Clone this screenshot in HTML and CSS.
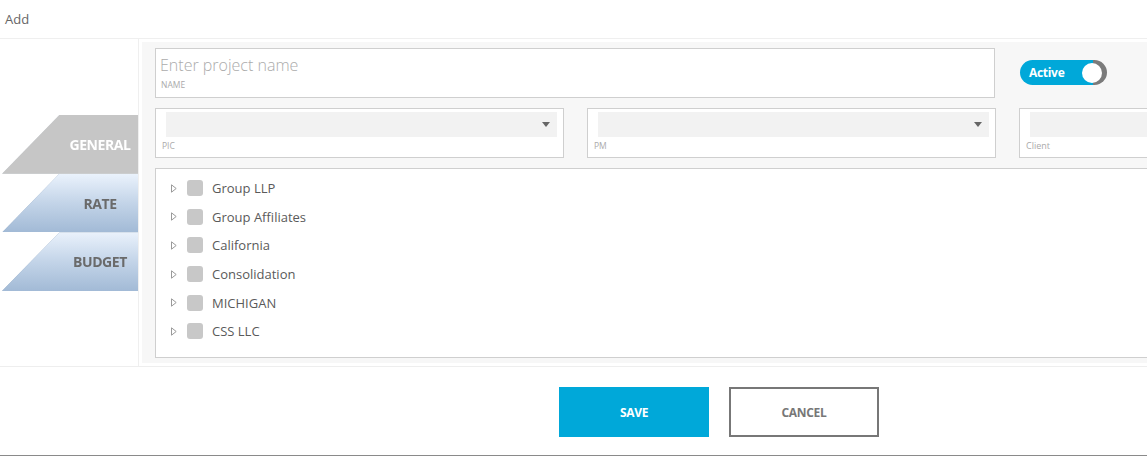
FILE: index.html
```html
<!DOCTYPE html>
<html>
<head>
<meta charset="utf-8">
<link rel="stylesheet" href="styles.css">
</head>
<body>
<div class="header">Add</div>
<div class="main">
  <div class="tabs">
    <div class="tab-wrap"><div class="tab tab-active">GENERAL</div></div>
    <div class="tab-wrap blue"><div class="tab tab-blue">RATE</div></div>
    <div class="tab-wrap blue"><div class="tab tab-blue">BUDGET</div></div>
  </div>
  <div class="content">
    <div class="panel">
      <div class="row1">
        <div class="field name-field">
          <div class="placeholder">Enter project name</div>
          <div class="label">NAME</div>
        </div>
        <div class="toggle">
          <span class="toggle-text">Active</span>
          <span class="knob"></span>
        </div>
      </div>
      <div class="row2">
        <div class="field select-field">
          <div class="select-bar"><svg class="caret" width="8" height="5" viewBox="0 0 8 5"><path d="M0 0 H8 L4 5 Z" fill="#666"/></svg></div>
          <div class="label">PIC</div>
        </div>
        <div class="field select-field">
          <div class="select-bar"><svg class="caret" width="8" height="5" viewBox="0 0 8 5"><path d="M0 0 H8 L4 5 Z" fill="#666"/></svg></div>
          <div class="label">PM</div>
        </div>
        <div class="field select-field">
          <div class="select-bar"></div>
          <div class="label label-cap">Client</div>
        </div>
      </div>
      <div class="tree">
        <div class="tree-item"><svg class="arrow" width="6" height="9" viewBox="0 0 6 9"><path d="M0.5 0.8 L5.2 4.5 L0.5 8.2 Z" fill="none" stroke="#9a9a9a" stroke-width="1"/></svg><span class="check"></span><span class="tree-text">Group LLP</span></div>
        <div class="tree-item"><svg class="arrow" width="6" height="9" viewBox="0 0 6 9"><path d="M0.5 0.8 L5.2 4.5 L0.5 8.2 Z" fill="none" stroke="#9a9a9a" stroke-width="1"/></svg><span class="check"></span><span class="tree-text">Group Affiliates</span></div>
        <div class="tree-item"><svg class="arrow" width="6" height="9" viewBox="0 0 6 9"><path d="M0.5 0.8 L5.2 4.5 L0.5 8.2 Z" fill="none" stroke="#9a9a9a" stroke-width="1"/></svg><span class="check"></span><span class="tree-text">California</span></div>
        <div class="tree-item"><svg class="arrow" width="6" height="9" viewBox="0 0 6 9"><path d="M0.5 0.8 L5.2 4.5 L0.5 8.2 Z" fill="none" stroke="#9a9a9a" stroke-width="1"/></svg><span class="check"></span><span class="tree-text">Consolidation</span></div>
        <div class="tree-item"><svg class="arrow" width="6" height="9" viewBox="0 0 6 9"><path d="M0.5 0.8 L5.2 4.5 L0.5 8.2 Z" fill="none" stroke="#9a9a9a" stroke-width="1"/></svg><span class="check"></span><span class="tree-text">MICHIGAN</span></div>
        <div class="tree-item"><svg class="arrow" width="6" height="9" viewBox="0 0 6 9"><path d="M0.5 0.8 L5.2 4.5 L0.5 8.2 Z" fill="none" stroke="#9a9a9a" stroke-width="1"/></svg><span class="check"></span><span class="tree-text">CSS LLC</span></div>
      </div>
    </div>
  </div>
</div>
<div class="footer">
  <button class="btn btn-save">SAVE</button>
  <button class="btn btn-cancel">CANCEL</button>
</div>
</body>
</html>
```

FILE: styles.css
```css
* { box-sizing: border-box; }
html, body { margin: 0; padding: 0; }
body {
  width: 1147px;
  height: 457px;
  overflow: hidden;
  background: #fff;
  font-family: "Open Sans", "Noto Sans", "Liberation Sans", sans-serif;
  color: #555;
}
.header {
  height: 39px;
  padding: 9px 0 0 5px;
  font-size: 13px;
  line-height: 20px;
  color: #666;
  border-bottom: 1px solid #efefef;
}
.main {
  display: flex;
  height: 328px;
  border-bottom: 1px solid #eeeeee;
}
.tabs {
  width: 139px;
  flex: none;
  border-right: 1px solid #efefef;
  padding-top: 76px;
  display: flex;
  flex-direction: column;
}
.tab-wrap {
  height: 58.7px;
  filter: drop-shadow(0 0 0.6px #d0d8e0);
}
.tab-wrap.blue {
  filter: drop-shadow(0 0 0.6px #8ea4bd);
}
.tab {
  height: 100%;
  clip-path: polygon(43% 0, 100% 0, 100% 100%, 1.5% 100%);
  padding-left: 62px;
  text-align: center;
  font-weight: 700;
  font-size: 14px;
  line-height: 60px;
  letter-spacing: -0.4px;
}
.tab-active {
  background: #c6c6c6;
  color: #fff;
}
.tab-blue {
  background: linear-gradient(to bottom, #eaf2fc 0%, #c3d4e8 50%, #a2bad6 100%);
  color: #6a6a6a;
}
.content {
  flex: 1;
  min-width: 0;
  padding: 3px 0 3px 3px;
}
.panel {
  height: 100%;
  background: #f7f7f7;
  padding: 6px 0 0 13px;
  overflow: hidden;
}
.field {
  background: #fff;
  border: 1px solid #cfcfcf;
  flex: none;
}
.row1 {
  display: flex;
  align-items: flex-start;
}
.name-field {
  width: 840px;
  height: 50px;
  padding: 4px 5px 0 4px;
}
.placeholder {
  font-size: 16px;
  font-weight: 300;
  line-height: 24px;
  color: #ababab;
}
.label {
  font-size: 8.5px;
  line-height: 10px;
  color: #aaa;
  margin-top: 3px;
  padding-left: 1px;
}
.label-cap { font-size: 9px; }
.toggle {
  margin: 12px 0 0 25px;
  width: 87px;
  height: 25px;
  border-radius: 12.5px;
  background: linear-gradient(to right, #00a8d9 0, #00a8d9 73px, #7b7b7b 73px);
  display: flex;
  align-items: center;
  padding: 0 5px 0 9px;
  flex: none;
}
.toggle-text {
  color: #fff;
  font-weight: 700;
  font-size: 12px;
  letter-spacing: -0.3px;
}
.knob {
  margin-left: auto;
  width: 20px;
  height: 20px;
  border-radius: 50%;
  background: #fff;
}
.row2 {
  display: flex;
  gap: 23px;
  margin-top: 10px;
}
.select-field {
  width: 409px;
  height: 50px;
  padding: 3px 6px 0 10px;
}
.select-bar {
  height: 25px;
  background: #f2f2f2;
  display: flex;
  align-items: center;
  justify-content: flex-end;
  padding-right: 7px;
}
.select-field .label {
  margin-top: 4px;
  margin-left: -5px;
}
.tree {
  margin-top: 10px;
  width: 1010px;
  height: 190px;
  background: #fff;
  border: 1px solid #cfcfcf;
  padding: 5px 0 0 15px;
}
.tree-item {
  height: 28.6px;
  display: flex;
  align-items: center;
}
.arrow {
  flex: none;
}
.check {
  width: 16px;
  height: 16px;
  border-radius: 3px;
  background: #c8c8c8;
  margin-left: 10px;
  flex: none;
}
.tree-text {
  margin-left: 9px;
  font-size: 13px;
  color: #5a5a5a;
}
.footer {
  height: 89px;
  border-bottom: 1px solid #8a8a8a;
  padding: 20px 0 0 559px;
  display: flex;
  gap: 20px;
  align-items: flex-start;
}
.btn {
  width: 150px;
  height: 50px;
  font-family: "Open Sans", "Noto Sans", "Liberation Sans", sans-serif;
  font-size: 12px;
  font-weight: 700;
  letter-spacing: -0.3px;
  cursor: pointer;
}
.btn-save {
  background: #00a8d9;
  border: none;
  color: #fff;
}
.btn-cancel {
  background: #fff;
  border: 2px solid #777;
  color: #777;
}
```
